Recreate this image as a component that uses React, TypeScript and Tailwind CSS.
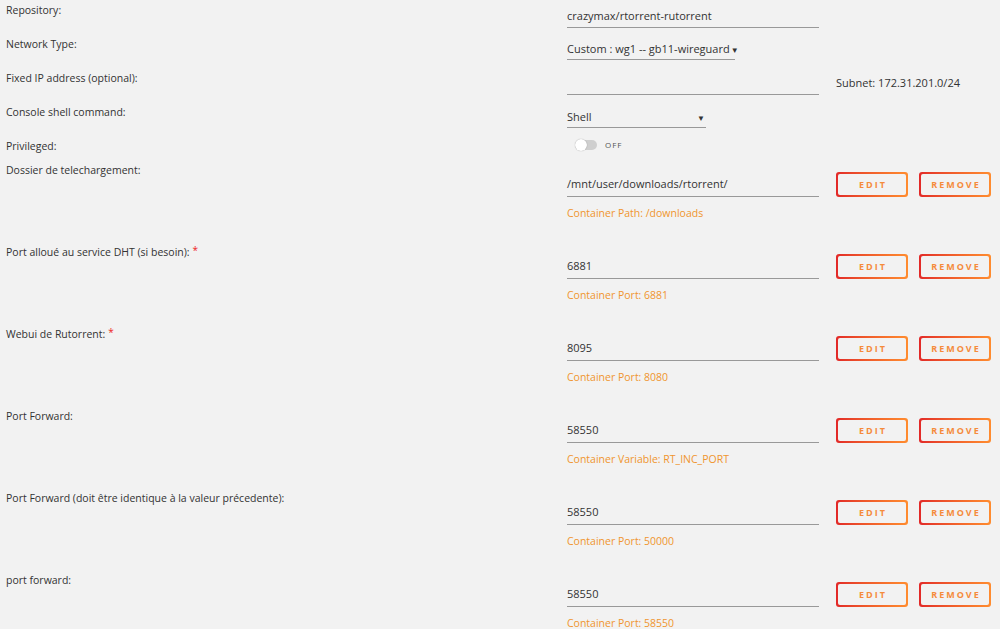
import React from "react";

const font = { fontFamily: '"Open Sans", "Noto Sans", sans-serif' };

function Label({ children, req }: { children: React.ReactNode; req?: boolean }) {
  return (
    <div className="w-[561px] shrink-0 text-[10.5px] leading-[14px] text-[#333] whitespace-nowrap">
      {children}
      {req && <span className="text-[#ee1c1c] text-[10px] ml-[3px] relative top-[-2px]">*</span>}
    </div>
  );
}

function Btn({ children }: { children: React.ReactNode }) {
  return (
    <div className="w-[72px] h-[25px] rounded-[3px] p-[2px] bg-gradient-to-r from-[#e22828] to-[#ff8c2f]">
      <div className="w-full h-full rounded-[2px] bg-[#f2f2f2] flex items-center justify-center">
        <span className="text-[9px] font-bold tracking-[2px] text-[#f58b3b] pl-[2px]">{children}</span>
      </div>
    </div>
  );
}

function Simple({ label, children, h }: { label: string; children: React.ReactNode; h: string }) {
  return (
    <div className={`flex pl-[6px] ${h}`}>
      <div className="pt-[3px]">
        <Label>{label}</Label>
      </div>
      <div className="pt-[6px]">{children}</div>
    </div>
  );
}

function Block({ label, value, note, req }: { label: string; value: string; note: string; req?: boolean }) {
  return (
    <div className="flex pl-[6px] h-[82px]">
      <Label req={req}>{label}</Label>
      <div className="pt-[9px]">
        <div className="flex">
          <div className="w-[252px] h-[25px] border-b border-[#999] flex items-end pb-[5px] text-[11px] leading-[14px] text-[#333]">
            {value}
          </div>
          <div className="ml-[17px] flex gap-[11px]">
            <Btn>EDIT</Btn>
            <Btn>REMOVE</Btn>
          </div>
        </div>
        <div className="mt-[9px] text-[10.5px] leading-[14px] text-[#f0952e]">{note}</div>
      </div>
    </div>
  );
}

export default function App() {
  return (
    <div className="w-[1000px] h-[629px] overflow-hidden bg-[#f2f2f2]" style={font}>
      <Simple label="Repository:" h="h-[34px]">
        <div className="w-[252px] h-[22px] border-b border-[#999] flex items-center text-[11px] text-[#333]">
          crazymax/rtorrent-rutorrent
        </div>
      </Simple>
      <Simple label="Network Type:" h="h-[34px]">
        <div className="w-[168px] h-[20px] border-b border-[#999] flex items-center text-[11px] text-[#333] whitespace-nowrap">
          Custom : wg1 -- gb11-wireguard<span className="text-[8px] ml-[1px]">▼</span>
        </div>
      </Simple>
      <Simple label="Fixed IP address (optional):" h="h-[34px]">
        <div className="flex items-center">
          <div className="w-[252px] h-[21px] border-b border-[#999]" />
          <div className="ml-[17px] text-[11px] text-[#333] relative top-[-1px]">Subnet: 172.31.201.0/24</div>
        </div>
      </Simple>
      <Simple label="Console shell command:" h="h-[34px]">
        <div className="w-[139px] h-[20px] border-b border-[#999] flex items-center justify-between text-[11px] text-[#333]">
          <span>Shell</span>
          <span className="text-[8px] mr-[1px]">▼</span>
        </div>
      </Simple>
      <div className="flex pl-[6px] h-[27px]">
        <div className="pt-[3px]">
          <Label>Privileged:</Label>
        </div>
        <div className="pt-[3px] pl-[8px] flex items-center h-[14px]">
          <div className="relative w-[22px] h-[10px] rounded-full bg-[#cfcfcf]">
            <div className="absolute left-0 top-[-1px] w-[12px] h-[12px] rounded-full bg-white shadow-[0_0_1px_rgba(0,0,0,0.4)]" />
          </div>
          <span className="ml-[8px] text-[8px] tracking-[1px] text-[#555]">OFF</span>
        </div>
      </div>
      <Block label="Dossier de telechargement:" value="/mnt/user/downloads/rtorrent/" note="Container Path: /downloads" />
      <Block label="Port alloué au service DHT (si besoin):" req value="6881" note="Container Port: 6881" />
      <Block label="Webui de Rutorrent:" req value="8095" note="Container Port: 8080" />
      <Block label="Port Forward:" value="58550" note="Container Variable: RT_INC_PORT" />
      <Block label="Port Forward (doit être identique à la valeur précedente):" value="58550" note="Container Port: 50000" />
      <Block label="port forward:" value="58550" note="Container Port: 58550" />
    </div>
  );
}
